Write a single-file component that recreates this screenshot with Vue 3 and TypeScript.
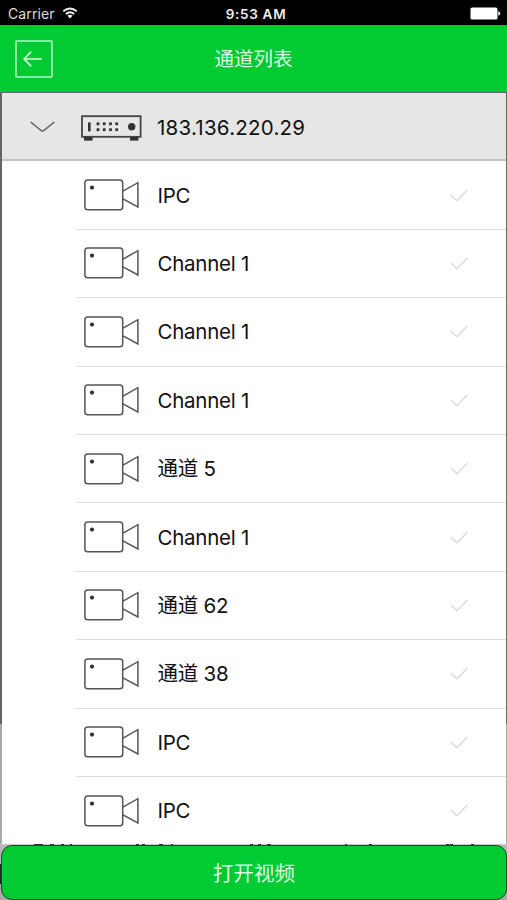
<script setup lang="ts">
interface Channel {
  id: number
  name: string
}

const names: string[] = [
  'IPC', 'Channel 1', 'Channel 1', 'Channel 1', '通道 5',
  'Channel 1', '通道 62', '通道 38', 'IPC', 'IPC',
]
const channels: Channel[] = names.map((name, id) => ({ id, name }))
const ledColumns: number[] = [17, 23.2, 29.5, 35.7]
</script>

<template>
  <div class="screen">
    <header class="status">
      <div class="carrier">
        <span>Carrier</span>
        <svg class="wifi" width="16" height="12" viewBox="0 0 16 12">
          <path d="M1.3 4.3Q8-1.4 14.7 4.3" />
          <path d="M3.8 7Q8 3.4 12.2 7" />
          <path class="solid" d="M5.4 8.7Q8 6.6 10.6 8.7L8 11.4Z" />
        </svg>
      </div>
      <span class="time">9:53 AM</span>
      <svg class="battery" width="31" height="13" viewBox="0 0 31 13">
        <rect x="0.5" y="0.5" width="27" height="12" rx="1.6" />
        <path d="M28.3 4.2Q30.2 4.8 30.2 6.5T28.3 8.8Z" />
      </svg>
    </header>

    <nav class="nav">
      <button class="back" aria-label="返回">
        <svg width="20" height="18" viewBox="0 0 20 18">
          <path d="M19 9H1.2M8.2 1.7L1.2 9L8.2 16.3" />
        </svg>
      </button>
      <h1 class="title">通道列表</h1>
    </nav>

    <main class="list">
      <div class="device">
        <svg class="chevron" width="25" height="12" viewBox="0 0 25 12">
          <path d="M0.7 1L10.8 9.3Q12.5 10.7 14.2 9.3L24.3 1" />
        </svg>
        <svg class="recorder" width="61" height="26" viewBox="0 0 61 26">
          <rect class="case" x="1" y="1.2" width="58.6" height="20.6" />
          <rect x="7" y="7.4" width="2.6" height="9" />
          <template v-for="x in ledColumns" :key="x">
            <rect :x="x - 1.4" y="7.4" width="2.8" height="2.8" />
            <rect :x="x - 1.4" y="13.3" width="2.8" height="2.8" />
          </template>
          <circle cx="50.7" cy="11.8" r="3.7" />
          <rect x="3" y="22" width="8.6" height="3.6" />
          <rect x="49" y="22" width="8.4" height="3.6" />
        </svg>
        <span class="name address">183.136.220.29</span>
      </div>

      <ul class="channels">
        <li v-for="channel in channels" :key="channel.id" class="channel">
          <svg class="camera" width="56" height="32" viewBox="0 0 56 32">
            <rect x="0.9" y="0.9" width="37.8" height="29.9" rx="2.8" />
            <circle cx="8" cy="8.6" r="2.1" />
            <path d="M39 12.1L53.9 3.7V28L39 19.8" />
          </svg>
          <span class="name">{{ channel.name }}</span>
          <svg class="check" width="18" height="13" viewBox="0 0 18 13">
            <path d="M0.8 6L7 11.8L17.3 1" />
          </svg>
        </li>
      </ul>
    </main>

    <footer class="footer">
      <svg class="edge" width="507" height="1" viewBox="0 0 507 1">
        <path d="M34 .5h9M50 .5h4M61 .5h3M70 .5h2M136 .5h3M142 .5h3M159 .5h4M171 .5h2M250 .5h3M258 .5h3M267 .5h4M345 .5h2M369 .5h3M446 .5h3M450 .5h3M471 .5h3" />
      </svg>
      <button class="open">打开视频</button>
    </footer>
  </div>
</template>

<style>
body {
  margin: 0;
  background: #fff;
}
</style>

<style scoped>
.screen {
  display: flex;
  flex-direction: column;
  width: 507px;
  height: 900px;
  overflow: hidden;
  font-family: Inter, "Noto Sans CJK SC", sans-serif;
  color: #111;
}

svg {
  display: block;
  flex: none;
}

.status {
  display: grid;
  grid-template-columns: 1fr auto 1fr;
  align-items: center;
  box-sizing: border-box;
  height: 25px;
  padding: 2px 6px 0 8px;
  background: #000;
  color: #dedede;
  font-size: 14px;
}

.carrier {
  display: flex;
  align-items: center;
  gap: 7px;
  letter-spacing: 0.1px;
}

.wifi {
  margin-top: -2px;
  fill: none;
  stroke: #eee;
  stroke-width: 1.9;
}

.wifi .solid {
  fill: #eee;
  stroke: none;
}

.time {
  padding-left: 3px;
  color: #eee;
  font-size: 13.5px;
  font-weight: 600;
  letter-spacing: 0.7px;
}

.battery {
  justify-self: end;
  fill: #fff;
}

.nav {
  display: grid;
  grid-template-columns: 38px 1fr 38px;
  align-items: center;
  box-sizing: border-box;
  height: 67px;
  padding: 0 15px;
  background: #02ca32;
}

.back {
  display: flex;
  align-items: center;
  justify-content: center;
  box-sizing: border-box;
  width: 38px;
  height: 38px;
  padding: 0 2px 0 0;
  border: 2px solid #8be9a2;
  border-radius: 2px;
  background: none;
}

.back svg {
  fill: none;
  stroke: #d3fadb;
  stroke-width: 1.7;
}

.title {
  margin: 0;
  color: #dcfbe3;
  font-size: 19.5px;
  font-weight: 400;
  line-height: 28px;
  text-align: center;
}

.list {
  box-sizing: border-box;
  height: 752px;
  border-top: 1px solid #476b4d;
  border-right: 1px solid;
  border-left: 2px solid;
  border-image: linear-gradient(#666 632px, #aaa 632px) 1 1 0 2;
  background: #fff;
}

.device {
  display: flex;
  align-items: center;
  box-sizing: border-box;
  height: 68.4px;
  padding: 2px 0 0 28px;
  border-bottom: 2px solid #c4c4c4;
  background: #e6e6e6;
}

.chevron {
  fill: none;
  stroke: #555c61;
  stroke-width: 1.4;
}

.recorder {
  margin: 1px 15px 0 26px;
  fill: #333;
}

.recorder .case {
  fill: none;
  stroke: #444;
  stroke-width: 1.8;
}

.name {
  padding-top: 1px;
  font-size: 20.5px;
  line-height: 28px;
  letter-spacing: -0.25px;
  white-space: pre;
}

.name.address {
  letter-spacing: 0.25px;
}

.channels {
  margin: 0 0 0 74px;
  padding: 0;
  list-style: none;
}

.channel {
  display: flex;
  align-items: center;
  box-sizing: border-box;
  height: 68.4px;
  padding: 0 38px 0 8px;
  border-bottom: 1px solid #dcdcdc;
}

.channel:last-child {
  border-bottom-color: transparent;
}

.camera {
  margin-right: 17.5px;
  fill: none;
  stroke: #555;
  stroke-width: 1.5;
}

.camera circle {
  fill: #333;
  stroke: none;
}

.check {
  margin-left: auto;
  fill: none;
  stroke: #dcdcdc;
  stroke-width: 1.5;
}

.footer {
  height: 56px;
  background: linear-gradient(#b8b8b8 20px, #222 20px, #222 40px, #aaa 40px);
}

.edge {
  background: #c8c8c8;
  stroke: #333;
}

.open {
  display: block;
  box-sizing: border-box;
  width: 506px;
  height: 55px;
  margin-left: 1px;
  padding: 2px 0 0;
  border: 1px solid #154d20;
  border-radius: 11px;
  background: #02ca32;
  color: #dcfbe3;
  font-family: inherit;
  font-size: 20.5px;
  line-height: 28px;
}
</style>
